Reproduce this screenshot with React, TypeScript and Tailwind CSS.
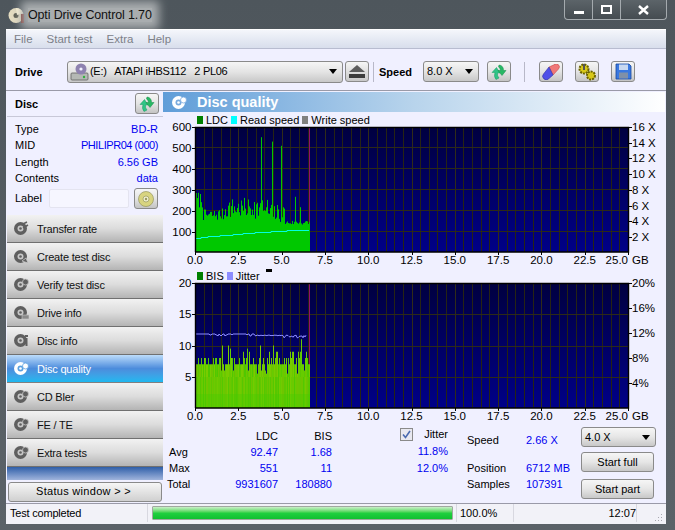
import React from "react";

const FONT = "[font-family:'Liberation_Sans','Noto_Sans',sans-serif]";

function rng(seed: number) {
  let s = seed;
  return () => {
    s = (s * 1664525 + 1013904223) % 4294967296;
    return s / 4294967296;
  };
}

const Refresh = ({ size = 18 }: { size?: number }) => (
  <svg width={size} height={size} viewBox="0 0 18 18">
    <path d="M6 16.500Q3.500 13.500 5 9.500H2L6.500 4.500L10 10H7.500Q7 13 9 15Z" fill="#2fc486" stroke="#179a62" strokeWidth="0.5" />
    <path d="M9 2Q13.500 2.500 13.500 7.500H16L12 12.500L8 7.500H10.500Q10.500 5 8.500 4Z" fill="#27b864" stroke="#128a48" strokeWidth="0.5" />
  </svg>
);

const NavDisc = ({ active, glyph }: { active?: boolean; glyph: number }) => {
  const c = active ? "#ffffff" : "#5f5f5f";
  const h = active ? "#5aa0e0" : "#c8c8c8";
  return (
    <svg width="15" height="15" viewBox="0 0 15 15" className="shrink-0">
      <circle cx="6.500" cy="7.500" r="6.500" fill={c} />
      <circle cx="6.500" cy="7.500" r="3" fill={h} />
      <circle cx="6.500" cy="7.500" r="1.300" fill={c} />
      {glyph === 0 && <path d="M9 3L13 1M9 7L14 4" stroke={c} strokeWidth="1.500" />}
      {glyph === 1 && <path d="M8 12L14 14L12 9Z" fill={c} stroke={h} strokeWidth="0.8" />}
      {glyph === 2 && <circle cx="11.500" cy="5" r="3" fill={c} stroke={h} strokeWidth="0.8" />}
      {glyph === 3 && <rect x="8" y="10" width="7" height="4" fill="#8a8a8a" stroke={h} strokeWidth="0.6" />}
      {glyph === 4 && <path d="M11 3H14M12.500 5V13" stroke={c} strokeWidth="2" />}
    </svg>
  );
};

const Tb = ({ children }: { children: React.ReactNode }) => (
  <div className="w-[24px] h-[21px] flex items-center justify-center rounded-[3px] border border-[#8a8a8a] bg-gradient-to-b from-[#f6f6f6] via-[#e4e4e4] to-[#c4c4c4] shrink-0">
    {children}
  </div>
);

const Caret = () => (
  <svg width="8" height="5" viewBox="0 0 8 5" className="shrink-0">
    <path d="M0 0H8L4 5Z" fill="#000" />
  </svg>
);

const navItems = [
  ["Transfer rate", 0],
  ["Create test disc", 1],
  ["Verify test disc", 2],
  ["Drive info", 3],
  ["Disc info", 4],
  ["Disc quality", 2],
  ["CD Bler", 2],
  ["FE / TE", 2],
  ["Extra tests", 2],
] as const;

const PX = 32;
const PW = 433;
const PH = 125;

function Grid({ hLines }: { hLines: number[] }) {
  const v: number[] = [];
  for (let i = 1; i < 50; i++) v.push(i);
  return (
    <g>
      {v.map((i) => {
        const x = Math.round(PX + (i * PW) / 50) + 0.5;
        return <line key={i} x1={x} x2={x} y1={0} y2={PH} stroke={i % 5 === 0 ? "#302c18" : "#262414"} strokeWidth="1" />;
      })}
      {hLines.map((y) => {
        const yy = Math.round(y) + 0.5;
        return <line key={y} x1={PX} x2={PX + PW} y1={yy} y2={yy} stroke="#2c2a18" strokeWidth="1" />;
      })}
    </g>
  );
}

const XAxis = () => {
  const labels = ["0.0", "2.5", "5.0", "7.5", "10.0", "12.5", "15.0", "17.5", "20.0", "22.5", "25.0"];
  return (
    <g fontSize="11.500" fill="#000">
      {labels.map((l, i) => {
        const x = PX + (i * PW) / 10;
        return (
          <g key={l}>
            <line x1={Math.round(x) + 0.5} x2={Math.round(x) + 0.5} y1={PH} y2={PH + 3} stroke="#000" />
            <text x={x} y={PH + 12} textAnchor={i === 10 ? "end" : "middle"}>
              {l}
            </text>
          </g>
        );
      })}
      <text x={PX + PW + 4} y={PH + 12}>
        GB
      </text>
    </g>
  );
};

const Frame = () => (
  <path d={`M${PX + 0.5} ${PH}V0.500H${PX + PW + 0.5}V${PH}H${PX}`} fill="none" stroke="#000" strokeWidth="1.400" />
);

function ldcPath() {
  const r = rng(7);
  const env = (i: number) => {
    if (i < 8) return 210 + r() * 80;
    if (i < 20) return 150 + r() * 55;
    if (i < 30) return 150 + r() * 60;
    if (i < 70) return 160 + r() * 100;
    if (i < 90) return 140 + r() * 90;
    return 130 + r() * 22;
  };
  const spikes: Record<number, number> = { 66: 551, 77: 530, 86: 510, 59: 240, 72: 250, 100: 265, 105: 215 };
  let d = "";
  for (let i = 0; i < 115; i++) {
    const v = spikes[i] ?? env(i);
    const y = PH - (v * 125) / 600;
    d += `M${PX + i + 0.5} ${PH}V${y.toFixed(1)}`;
  }
  return d;
}

function Chart1() {
  const hs = [100, 200, 300, 400, 500].map((v) => PH - (v * 125.5) / 600);
  const leftLabels = [600, 500, 400, 300, 200, 100];
  const right = ["16 X", "14 X", "12 X", "10 X", "8 X", "6 X", "4 X", "2 X"];
  return (
    <svg width="502" height="142" viewBox="0 0 502 142" className="overflow-visible block shrink-0">
      <defs>
        <linearGradient id="plotA" x1="0" y1="0" x2="0" y2="1">
          <stop offset="0" stopColor="#000040" />
          <stop offset="1" stopColor="#000088" />
        </linearGradient>
      </defs>
      <rect x={PX} y={0} width={PW} height={PH} fill="url(#plotA)" />
      <Grid hLines={hs} />
      <line x1={146.5} x2={146.5} y1={0} y2={PH} stroke="#901070" />
      <path d={ldcPath()} stroke="#00c800" strokeWidth="1" />
      <path
        d={`M${PX} 111.500H38V110.500H45V109.500H57V108.500H70V107.500H80V106.500H92V105.500H108V104.500H124V103.500H146`}
        fill="none"
        stroke="#00ffe0"
        strokeWidth="1"
      />
      <Frame />
      <g fontSize="11.500" fill="#000">
        {leftLabels.map((v, i) => (
          <g key={v}>
            <text x={28.5} y={(i * 105) / 5 + 4} textAnchor="end">
              {v}
            </text>
            <line x1={29} x2={PX} y1={i * 21 + 0.5} y2={i * 21 + 0.5} stroke="#000" />
          </g>
        ))}
        {right.map((t, i) => (
          <g key={t}>
            <line x1={PX + PW} x2={PX + PW + 4} y1={Math.round(i * 15.7) + 0.5} y2={Math.round(i * 15.7) + 0.5} stroke="#000" />
            <text x={PX + PW + 4} y={i * 15.7 + 4}>
              {t}
            </text>
          </g>
        ))}
      </g>
      <XAxis />
    </svg>
  );
}

function bisBars() {
  const r = rng(21);
  const cols = ["#6cc800", "#5cc800", "#78cc00", "#50c800", "#66cc00", "#70c400"];
  const out: { x: number; top: number; c: string; c2: string }[] = [];
  const spikes: Record<number, number> = { 27: 10, 33: 10, 52: 9.5, 65: 10, 78: 10, 106: 11, 35: 9.5 };
  for (let i = 0; i < 115; i++) {
    const k = r();
    const top = spikes[i] ?? (k < 0.04 ? 5.5 : k < 0.08 ? 6 : k < 0.6 ? 7 : k < 0.86 ? 8 : 9);
    out.push({ x: i, top, c: cols[Math.floor(r() * cols.length)], c2: cols[Math.floor(r() * cols.length)] });
  }
  return out;
}

function jitterPoints() {
  const r = rng(5);
  let p = "";
  for (let i = 0; i < 112; i++) {
    let y = 51;
    if (i > 12 && i < 60) y = 51 + Math.round(r() * 1.6) * (r() < 0.5 ? 1 : 0);
    if (i >= 60 && i < 88) y = 52 + r() * 1;
    if (i >= 88) y = 52 + r() * 3;
    p += `${PX + i},${y.toFixed(1)} `;
  }
  return p;
}

function Chart2() {
  const bars = bisBars();
  const labels = [20, 15, 10, 5];
  const right = ["20%", "16%", "12%", "8%", "4%"];
  return (
    <svg width="502" height="142" viewBox="0 0 502 142" className="overflow-visible block shrink-0">
      <defs>
        <linearGradient id="plotB" x1="0" y1="0" x2="0" y2="1">
          <stop offset="0" stopColor="#000040" />
          <stop offset="1" stopColor="#000088" />
        </linearGradient>
      </defs>
      <rect x={PX} y={0} width={PW} height={PH} fill="url(#plotB)" />
      <Grid hLines={[31, 63, 94]} />
      <line x1={146.5} x2={146.5} y1={0} y2={94} stroke="#901070" />
      {bars.map((b) => (
        <g key={b.x}>
          <line x1={PX + b.x + 0.5} x2={PX + b.x + 0.5} y1={PH} y2={PH - b.top * 6.25} stroke={b.c} />
          <line x1={PX + b.x + 0.5} x2={PX + b.x + 0.5} y1={PH} y2={PH - 31} stroke={b.c2} opacity={0.8} />
          <line x1={PX + b.x + 0.5} x2={PX + b.x + 0.5} y1={PH} y2={PH - 14} stroke="#44cc00" opacity={0.35} />
        </g>
      ))}
      <polyline points={jitterPoints()} fill="none" stroke="#8c8cff" strokeWidth="1" />
      <Frame />
      <g fontSize="11.500" fill="#000">
        {labels.map((v, i) => (
          <g key={v}>
            <text x={28.5} y={i * 31.4 + 4} textAnchor="end">
              {v}
            </text>
            <line x1={29} x2={PX} y1={Math.round(i * 31.4) + 0.5} y2={Math.round(i * 31.4) + 0.5} stroke="#000" />
          </g>
        ))}
        {right.map((t, i) => (
          <g key={t}>
            <line x1={PX + PW} x2={PX + PW + 4} y1={i * 25 + 0.5} y2={i * 25 + 0.5} stroke="#000" />
            <text x={PX + PW + 4} y={i * 25 + 4}>
              {t}
            </text>
          </g>
        ))}
      </g>
      <XAxis />
    </svg>
  );
}

const Legend = ({ c, t }: { c: string; t: string }) => (
  <span className="flex items-center gap-[3px]">
    <span className="w-[6px] h-[8px]" style={{ background: c }} />
    <span>{t}</span>
  </span>
);

const Btn = ({ t, mt }: { t: string; mt: string }) => (
  <div
    className={`w-[73px] ${mt} h-[20px] flex items-center justify-center rounded-[3px] border border-[#8a8a8a] bg-gradient-to-b from-[#f6f6f6] via-[#e6e6e6] to-[#c8c8c8] text-black`}
  >
    {t}
  </div>
);

export default function App() {
  return (
    <div className={`${FONT} w-[675px] h-[530px] flex flex-col text-[11px] leading-none text-black bg-gradient-to-b from-[#4e565c] to-[#5b6268] overflow-hidden`}>
      {/* Title bar */}
      <div className="h-[29px] flex shrink-0 justify-between items-start pl-[8px] pr-[8px]">
        <div className="flex items-center gap-[3px] h-[24px] mt-[3px]">
          <svg width="17" height="17" viewBox="0 0 17 17">
            <circle cx="8" cy="8.500" r="7.500" fill="#e4dcc0" />
            <circle cx="8" cy="8.500" r="2.500" fill="#5c5c50" />
            <path d="M8 1A7.500 7.500 0 0 1 15 6L9 8Z" fill="#fff6d8" />
            <rect x="13" y="7" width="3" height="9" fill="#7a1a10" />
          </svg>
          <div className="bg-[#a9adaf] shadow-[0_0_10px_7px_#a9adaf] text-[12.500px] tracking-[-0.15px] h-[14px] flex items-center text-[#111] mr-[8px]">
            Opti Drive Control 1.70
          </div>
        </div>
        <div className="flex h-[20px] w-[103px] border border-t-0 border-[#a4aaae] rounded-b-[4px] bg-gradient-to-b from-[#5c6469] to-[#454c51]">
          <div className="w-[28px] flex items-center justify-center border-r border-[#a4aaae]">
            <span className="w-[10px] h-[3px] mt-[6px] bg-white" />
          </div>
          <div className="w-[28px] flex items-center justify-center border-r border-[#a4aaae]">
            <span className="w-[11px] h-[9px] border-2 border-white" />
          </div>
          <div className="flex-1 flex items-center justify-center">
            <svg width="11" height="10" viewBox="0 0 11 10">
              <path d="M1 1L10 9M10 1L1 9" stroke="#fff" strokeWidth="2.400" />
            </svg>
          </div>
        </div>
      </div>

      {/* Client */}
      <div className="flex-1 min-h-0 ml-[6px] mr-[9px] mb-[6px] flex flex-col bg-[#f0f0ff] border-t border-[#fff]">
        {/* Menu */}
        <div className="h-[19px] shrink-0 flex items-center gap-[14px] pl-[8px] pt-px text-[11.500px] text-[#7c8088] bg-gradient-to-b from-[#f4f6fb] to-[#d8deec] border-b border-[#b8bcd0]">
          <span>File</span>
          <span>Start test</span>
          <span>Extra</span>
          <span>Help</span>
        </div>
        {/* Toolbar */}
        <div className="h-[42px] shrink-0 flex items-center pl-[9px] pt-[4px] border-b border-[#9a9aa8]">
          <span className="font-bold w-[52px] pt-px">Drive</span>
          <div className="w-[276px] h-[22px] flex items-center pl-[2px] pr-[5px] rounded-[3px] border border-[#8a8a8a] bg-gradient-to-b from-[#f6f6f6] via-[#e4e4e4] to-[#c8c8c8]">
            <svg width="20" height="18" viewBox="0 0 20 18" className="shrink-0">
              <rect x="1" y="10" width="17" height="7" rx="1" fill="#b4b8b4" stroke="#606060" strokeWidth="0.8" />
              <circle cx="11" cy="6" r="5.500" fill="#8e82b0" />
              <circle cx="11" cy="6" r="1.600" fill="#f0f0ff" />
              <circle cx="14" cy="14" r="1.200" fill="#30b040" />
            </svg>
            <span className="whitespace-pre flex-1 tracking-[-0.3px]">(E:)   ATAPI iHBS112   2 PL06</span>
            <Caret />
          </div>
          <div className="w-[24px] h-[21px] ml-[2px] flex items-center justify-center rounded-[3px] border border-[#8a8a8a] bg-gradient-to-b from-[#f6f6f6] to-[#c8c8c8]">
            <svg width="16" height="13" viewBox="0 0 16 13">
              <path d="M8 0L16 7H0Z" fill="#5c5c5c" />
              <rect x="0" y="9" width="16" height="4" fill="#3c3c3c" />
            </svg>
          </div>
          <span className="w-px h-[20px] bg-[#b8b8c8] ml-[4px]" />
          <span className="font-bold ml-[5px] w-[44px] pt-px">Speed</span>
          <div className="w-[56px] h-[21px] flex items-center justify-between pl-[3px] pr-[5px] rounded-[3px] border border-[#8a8a8a] bg-gradient-to-b from-[#f6f6f6] via-[#e4e4e4] to-[#c8c8c8]">
            <span>8.0 X</span>
            <Caret />
          </div>
          <div className="ml-[8px]">
            <Tb>
              <Refresh />
            </Tb>
          </div>
          <span className="w-px h-[20px] bg-[#b8b8c8] ml-[13px]" />
          <div className="ml-[14px]">
            <Tb>
              <svg width="18" height="16" viewBox="0 0 18 16">
                <path d="M7 3L12 0.800A3 3 0 0 1 16.500 5L11 11Z" fill="#f07878" stroke="#c84848" strokeWidth="0.6" />
                <path d="M7 3L11 11L7 14.500A3.500 3.500 0 0 1 1.500 10Z" fill="#5050e8" stroke="#3030a0" strokeWidth="0.6" />
              </svg>
            </Tb>
          </div>
          <div className="ml-[12px]">
            <Tb>
              <svg width="20" height="18" viewBox="0 0 20 18">
                <circle cx="7" cy="6" r="4.500" fill="#d8c818" stroke="#6a6200" strokeWidth="2" strokeDasharray="2 1" />
                <circle cx="14" cy="12.500" r="4" fill="#d8c818" stroke="#6a6200" strokeWidth="2" strokeDasharray="2 1" />
                <rect x="6" y="1" width="2" height="6" fill="#555" />
              </svg>
            </Tb>
          </div>
          <div className="ml-[12px]">
            <Tb>
              <svg width="17" height="17" viewBox="0 0 17 17">
                <path d="M1 1H14L16 3V16H1Z" fill="#3a78e0" stroke="#1848a0" strokeWidth="0.8" />
                <rect x="4" y="1.500" width="9" height="5.500" fill="#c8d8f0" />
                <rect x="4" y="9.500" width="9" height="6" fill="#8090a8" />
              </svg>
            </Tb>
          </div>
        </div>

        {/* Main */}
        <div className="flex-1 min-h-0 flex">
          {/* Left */}
          <div className="w-[156px] ml-px shrink-0 flex flex-col">
            <div className="h-[26px] shrink-0 flex items-center justify-between pl-[8px] pr-[4px] border-b border-[#c8c8d8]">
              <span className="font-bold pt-px">Disc</span>
              <Tb>
                <Refresh />
              </Tb>
            </div>
            <div className="flex flex-col pl-[8px] pr-[5px] pt-[4px]">
              {[
                ["Type", "BD-R", ""],
                ["MID", "PHILIPR04 (000)", "tracking-[-0.45px]"],
                ["Length", "6.56 GB", ""],
                ["Contents", "data", ""],
              ].map(([a, b, tr]) => (
                <div key={a} className="h-[16.250px] pt-px flex items-center justify-between">
                  <span>{a}</span>
                  <span className={`text-[#0000f0] ${tr}`}>{b}</span>
                </div>
              ))}
              <div className="flex items-center h-[23px] mt-px">
                <span className="w-[34px]">Label</span>
                <div className="w-[81px] h-[19px] bg-[#f6f6ff] border border-[#e4e4f0] rounded-[2px]" />
                <div className="ml-[5px]">
                  <Tb>
                    <svg width="16" height="16" viewBox="0 0 16 16">
                      <circle cx="8" cy="8" r="7.500" fill="#d8d480" stroke="#8a8a50" strokeWidth="0.6" />
                      <circle cx="8" cy="8" r="3" fill="#f0f0d0" stroke="#8a8a50" strokeWidth="0.6" />
                      <circle cx="8" cy="8" r="1.200" fill="#9a9a60" />
                    </svg>
                  </Tb>
                </div>
              </div>
            </div>
            <div className="flex flex-col mt-[5px]">
              {navItems.map(([t, g]) => {
                const active = t === "Disc quality";
                return (
                  <div
                    key={t}
                    className={
                      active
                        ? "h-[28px] flex items-center gap-[8px] pl-[7px] text-white bg-gradient-to-b from-[#bcdcfa] via-[#4c8cdc] to-[#1cb8f0] border-b border-[#808080]"
                        : "h-[28px] flex items-center gap-[8px] pl-[7px] text-[#111] bg-gradient-to-b from-[#f2f2f2] via-[#dcdcdc] to-[#b4b4b4] border-b border-[#707070]"
                    }
                  >
                    <NavDisc active={active} glyph={g} />
                    <span className="pt-px tracking-[-0.2px]">{t}</span>
                  </div>
                );
              })}
            </div>
            <div className="h-[13px] shrink-0 bg-gradient-to-b from-[#2f5fa8] to-[#a0b4dc]" />
            <div className="flex-1 flex items-center justify-center px-px">
              <div className="w-[154px] h-[20px] pr-[3px] flex items-center justify-center rounded-[3px] border border-[#8a8a8a] bg-gradient-to-b from-[#f6f6f6] to-[#d0d0d0] tracking-[0.3px]">
                Status window &gt; &gt;
              </div>
            </div>
          </div>
          {/* Right */}
          <div className="flex-1 min-w-0 flex flex-col mr-px">
            <div className="h-[20px] shrink-0 mt-px flex items-center pl-[9px] gap-[10px] bg-gradient-to-r from-[#5f9dd8] via-[#b8d4ec] to-[#ffffff]">
              <svg width="15" height="15" viewBox="0 0 15 15" className="shrink-0">
                <circle cx="6.500" cy="7.500" r="6.500" fill="#fff" />
                <circle cx="6.500" cy="7.500" r="3" fill="#78aade" />
                <circle cx="6.500" cy="7.500" r="1.300" fill="#fff" />
                <circle cx="11.500" cy="5" r="3" fill="#fff" stroke="#78aade" strokeWidth="0.8" />
              </svg>
              <span className="text-white font-bold text-[14.500px]">Disc quality</span>
            </div>
            <div className="h-[15px] shrink-0 flex items-center gap-[3px] pl-[34px] pt-px">
              <Legend c="#008000" t="LDC" />
              <Legend c="#00ffff" t="Read speed" />
              <Legend c="#808080" t="Write speed" />
            </div>
            <Chart1 />
            <div className="h-[14px] shrink-0 flex items-center gap-[3px] pl-[34px]">
              <Legend c="#008000" t="BIS" />
              <Legend c="#8c8cff" t="Jitter" />
              <span className="w-[6px] h-[3px] bg-black self-start ml-[3px]" />
            </div>
            <Chart2 />
            {/* Stats */}
            <div className="flex-1 min-h-0 flex pt-px">
              <div className="w-[174px] shrink-0 pl-[4px] pt-[2px] grid grid-cols-[47px_64px_54px] auto-rows-[16.250px] items-center justify-start">
                <span />
                <span className="text-right">LDC</span>
                <span className="text-right">BIS</span>
                <span className="pl-[2px]">Avg</span>
                <span className="text-right text-[#0000f0]">92.47</span>
                <span className="text-right text-[#0000f0]">1.68</span>
                <span className="pl-[2px]">Max</span>
                <span className="text-right text-[#0000f0]">551</span>
                <span className="text-right text-[#0000f0]">11</span>
                <span>Total</span>
                <span className="text-right text-[#0000f0]">9931607</span>
                <span className="text-right text-[#0000f0]">180880</span>
              </div>
              <div className="w-[111px] shrink-0 flex flex-col items-end">
                <div className="flex items-center h-[17px] w-[47px] justify-between">
                  <span className="w-[13px] h-[13px] -ml-[1px] border border-[#8a8a8a] bg-[#e8e8f0] flex items-center justify-center">
                    <svg width="9" height="9" viewBox="0 0 9 9">
                      <path d="M1 4.500L3.500 7.500L8 1" fill="none" stroke="#4a6ab0" strokeWidth="1.600" />
                    </svg>
                  </span>
                  <span>Jitter</span>
                </div>
                <span className="h-[17px] flex items-center text-[#0000f0]">11.8%</span>
                <span className="h-[17px] flex items-center text-[#0000f0]">12.0%</span>
              </div>
              <div className="w-[113px] ml-[19px] shrink-0 grid grid-cols-[59px_1fr] grid-rows-[16px_12px_16px_16px] content-start items-center pt-[6px]">
                <span>Speed</span>
                <span className="text-[#0000f0]">2.66 X</span>
                <span />
                <span />
                <span>Position</span>
                <span className="text-[#0000f0]">6712 MB</span>
                <span>Samples</span>
                <span className="text-[#0000f0]">107391</span>
              </div>
              <div className="flex flex-col ml-px pt-px">
                <div className="w-[75px] h-[20px] flex items-center justify-between pl-[3px] pr-[5px] rounded-[3px] border border-[#8a8a8a] bg-gradient-to-b from-[#f6f6f6] via-[#e6e6e6] to-[#c8c8c8]">
                  <span>4.0 X</span>
                  <Caret />
                </div>
                <Btn t="Start full" mt="mt-[5px]" />
                <Btn t="Start part" mt="mt-[7px]" />
              </div>
            </div>
          </div>
        </div>

        {/* Status bar */}
        <div className="h-[21px] shrink-0 flex items-center pb-[2px] border-t border-[#9a9aa8] bg-[#f2f2f8]">
          <span className="w-[141px] pl-[4px] pt-px shrink-0 tracking-[-0.2px]">Test completed</span>
          <span className="w-px h-full bg-[#d8d8e0]" />
          <div className="w-[301px] h-[14px] ml-[4px] border border-[#a0a8a0] bg-gradient-to-b from-[#c8f0c8] via-[#20d040] to-[#10c030] rounded-[1px]" />
          <span className="w-px h-full bg-[#d8d8e0] ml-[3px]" />
          <span className="w-[56px] pl-[3px] pt-px shrink-0">100.0%</span>
          <span className="w-px h-full bg-[#d8d8e0]" />
          <span className="w-[122px] text-right pt-px shrink-0">12:07</span>
          <span className="w-px h-full bg-[#d8d8e0]" />
          <span className="flex-1 flex justify-end items-end h-full pr-[3px]">
            <svg width="9" height="9" viewBox="0 0 9 9">
              <path d="M7 1h1v1H7zM4 4h1v1H4zM7 4h1v1H7zM1 7h1v1H1zM4 7h1v1H4zM7 7h1v1H7z" fill="#a8a8b0" />
            </svg>
          </span>
        </div>
      </div>
    </div>
  );
}
